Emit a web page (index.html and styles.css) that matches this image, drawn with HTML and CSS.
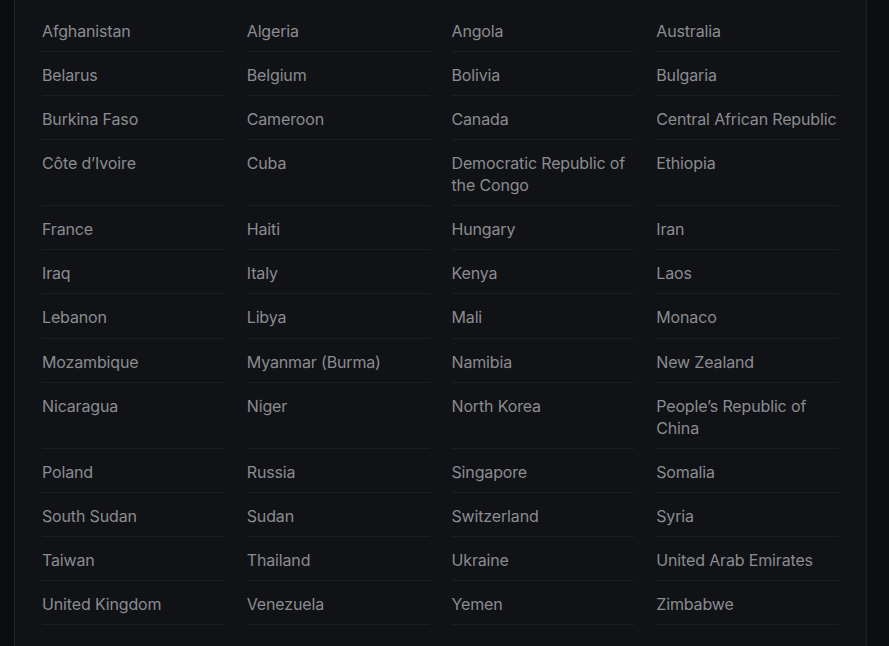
FILE: index.html
```html
<!DOCTYPE html>
<html lang="en">
<head>
<meta charset="utf-8">
<title>Countries</title>
<link rel="stylesheet" href="styles.css">
</head>
<body>
<main class="page">
  <section class="panel">
    <ul class="grid">
      <li>Afghanistan</li><li>Algeria</li><li>Angola</li><li>Australia</li>
      <li>Belarus</li><li>Belgium</li><li>Bolivia</li><li>Bulgaria</li>
      <li>Burkina Faso</li><li>Cameroon</li><li>Canada</li><li>Central African Republic</li>
      <li>Côte d’Ivoire</li><li>Cuba</li><li>Democratic Republic of the Congo</li><li>Ethiopia</li>
      <li>France</li><li>Haiti</li><li>Hungary</li><li>Iran</li>
      <li>Iraq</li><li>Italy</li><li>Kenya</li><li>Laos</li>
      <li>Lebanon</li><li>Libya</li><li>Mali</li><li>Monaco</li>
      <li>Mozambique</li><li>Myanmar (Burma)</li><li>Namibia</li><li>New Zealand</li>
      <li>Nicaragua</li><li>Niger</li><li>North Korea</li><li>People’s Republic of China</li>
      <li>Poland</li><li>Russia</li><li>Singapore</li><li>Somalia</li>
      <li>South Sudan</li><li>Sudan</li><li>Switzerland</li><li>Syria</li>
      <li>Taiwan</li><li>Thailand</li><li>Ukraine</li><li>United Arab Emirates</li>
      <li>United Kingdom</li><li>Venezuela</li><li>Yemen</li><li>Zimbabwe</li>
    </ul>
  </section>
</main>
</body>
</html>
```

FILE: styles.css
```css
html, body {
  margin: 0;
  padding: 0;
  height: 100%;
  background: #0c0d0f;
  overflow: hidden;
}
.page {
  padding: 0 22px 0 14px;
  height: 100%;
  background: linear-gradient(90deg, #0b0c0e 0%, #0d0e10 100%);
}
.panel {
  background: #111215;
  border-left: 1px solid #1f2024;
  border-right: 1px solid #1f2024;
  padding: 8px 27px 40px 27px;
  height: 100%;
  box-sizing: border-box;
}
.grid {
  list-style: none;
  margin: 0;
  padding: 0;
  display: grid;
  grid-template-columns: repeat(4, 1fr);
  column-gap: 22px;
}
.grid li {
  font-family: "Inter", "DejaVu Sans", sans-serif;
  font-size: 16px;
  letter-spacing: -0.15px;
  line-height: 22px;
  color: #8a8c91;
  padding: 12px 0 9.08px 0;
  border-bottom: 1px solid #1d1e22;
}
```
